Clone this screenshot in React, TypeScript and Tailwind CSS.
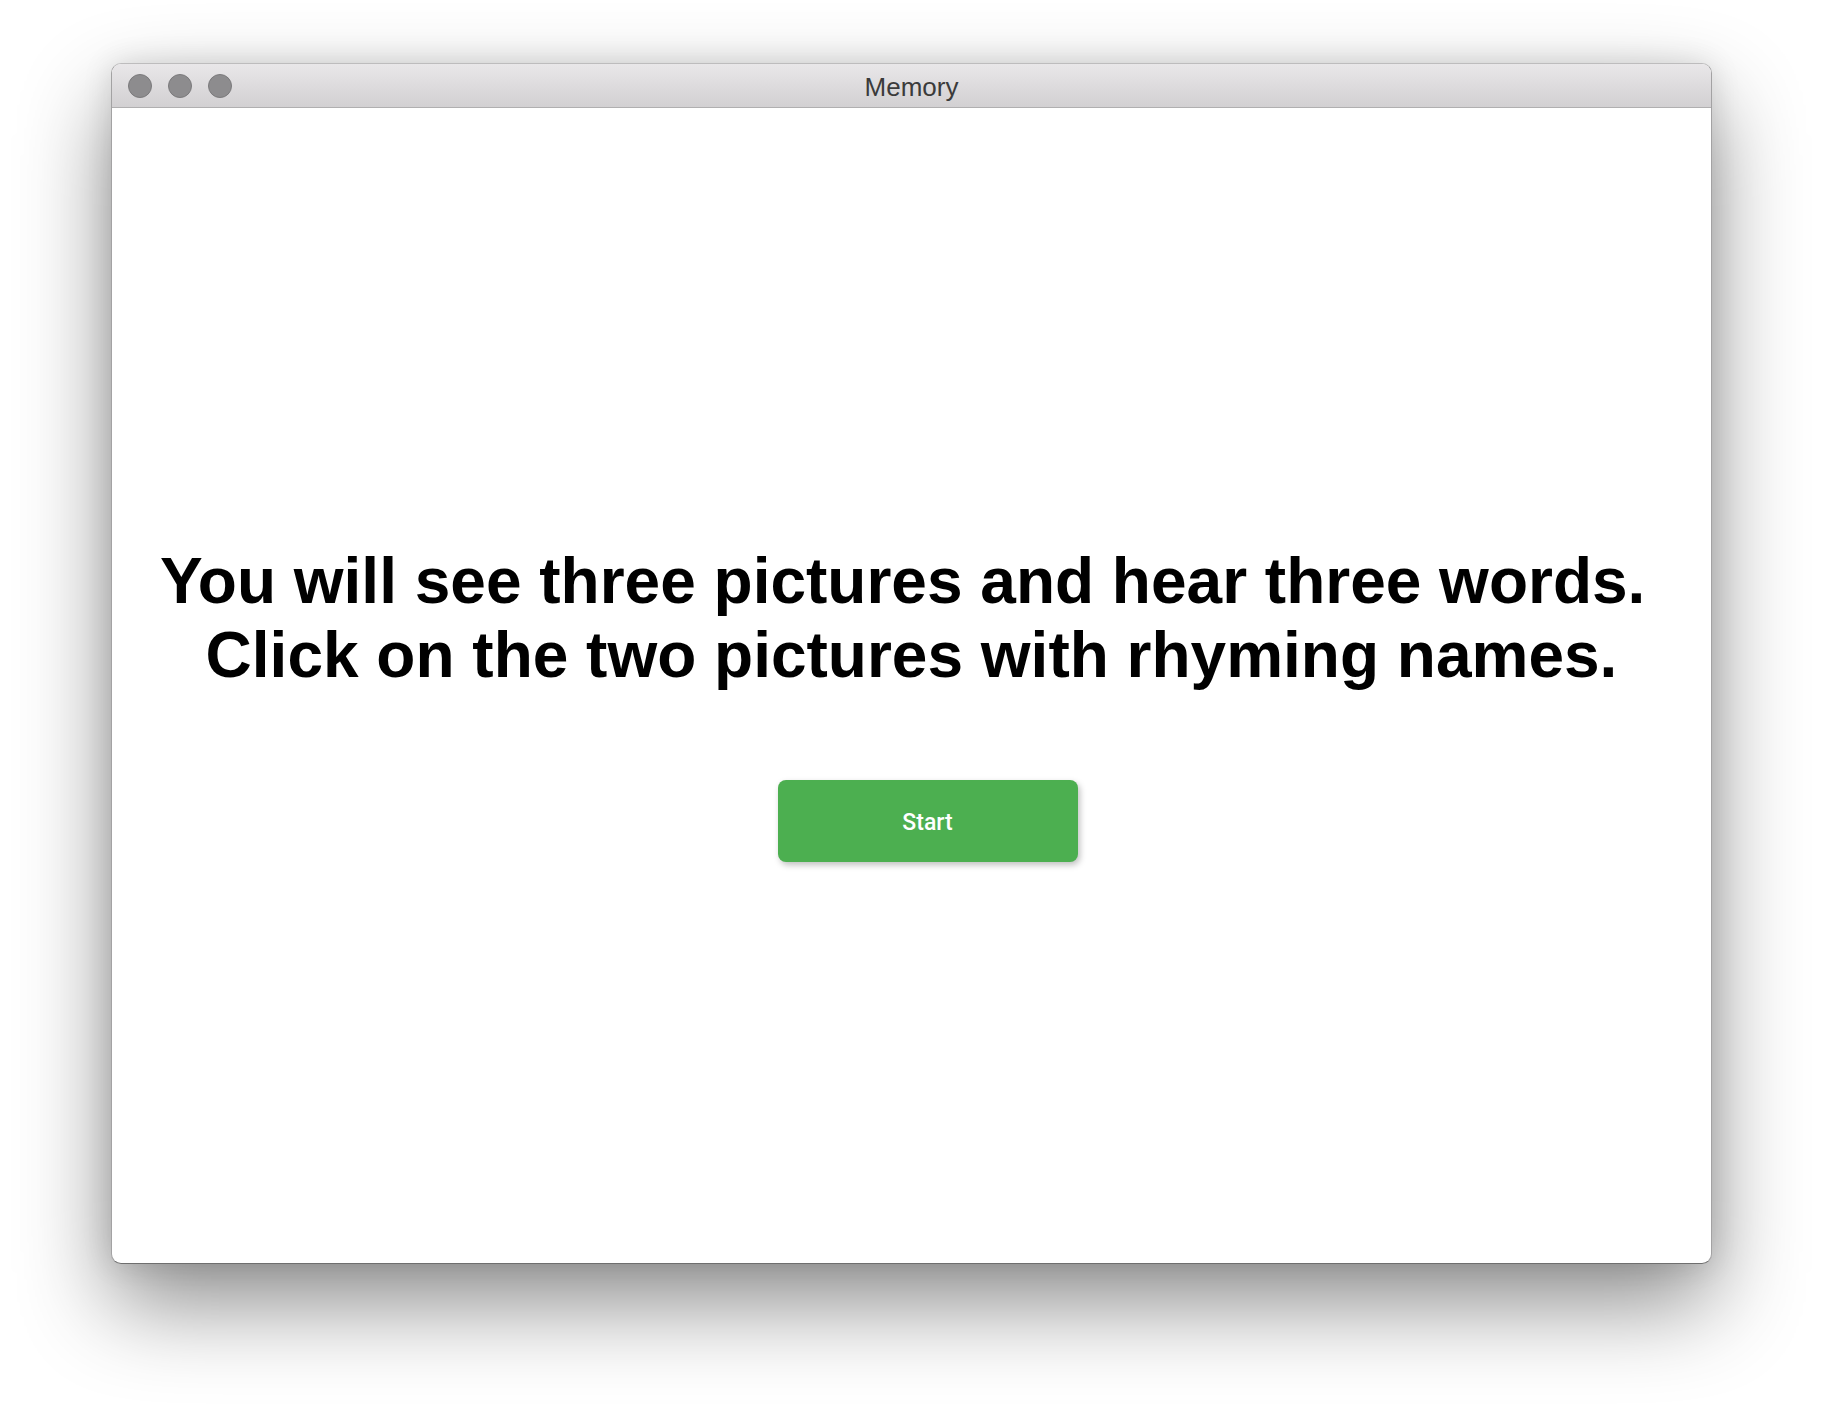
import * as React from 'react';

const TrafficLight: React.FC = () => (
  <span className="block w-[24px] h-[24px] rounded-full bg-[#8d8c8e] border border-[#7b7a7c]" />
);

export default function App() {
  return (
    <div className="w-[1824px] h-[1424px] bg-white pl-[111px] pt-[63px]">
      <div className="w-[1601px] h-[1201px] flex flex-col rounded-[10px] bg-white border border-[#a3a2a3] border-t-[#bdbcbd] border-b-[#6f6f6f] shadow-[0_40px_90px_rgba(0,0,0,0.45),0_0_30px_rgba(0,0,0,0.12)] overflow-hidden">
        {/* title bar */}
        <div className="relative h-[44px] shrink-0 flex items-center px-[16px] gap-[16px] bg-gradient-to-b from-[#e9e7e9] to-[#d2d0d2] border-b border-[#b0afb0]">
          <TrafficLight />
          <TrafficLight />
          <TrafficLight />
          <div
            className="absolute inset-0 flex items-center justify-center text-[26px] text-[#3b3b3b] pt-[4px]"
            style={{ fontFamily: '"Liberation Sans", Arial, sans-serif' }}
          >
            Memory
          </div>
        </div>

        {/* content */}
        <div className="flex-1 flex flex-col items-center pt-[437px]">
          <h1
            className="text-[64px] font-bold text-black text-center leading-[1.15]"
            style={{ fontFamily: '"Liberation Sans", Arial, sans-serif' }}
          >
            <span className="block">{'You will see three pictures and hear three words.\u00a0'}</span>
            <span className="block">Click on the two pictures with rhyming names.</span>
          </h1>
          <button
            className="mt-[88px] ml-[32px] w-[300px] h-[82px] pt-[4px] rounded-[8px] bg-[#4caf50] text-white text-[23px] font-medium shadow-[2px_3px_6px_rgba(0,0,0,0.25)]"
            style={{ fontFamily: 'Roboto, "Noto Sans", sans-serif' }}
          >
            Start
          </button>
        </div>
      </div>
    </div>
  );
}
